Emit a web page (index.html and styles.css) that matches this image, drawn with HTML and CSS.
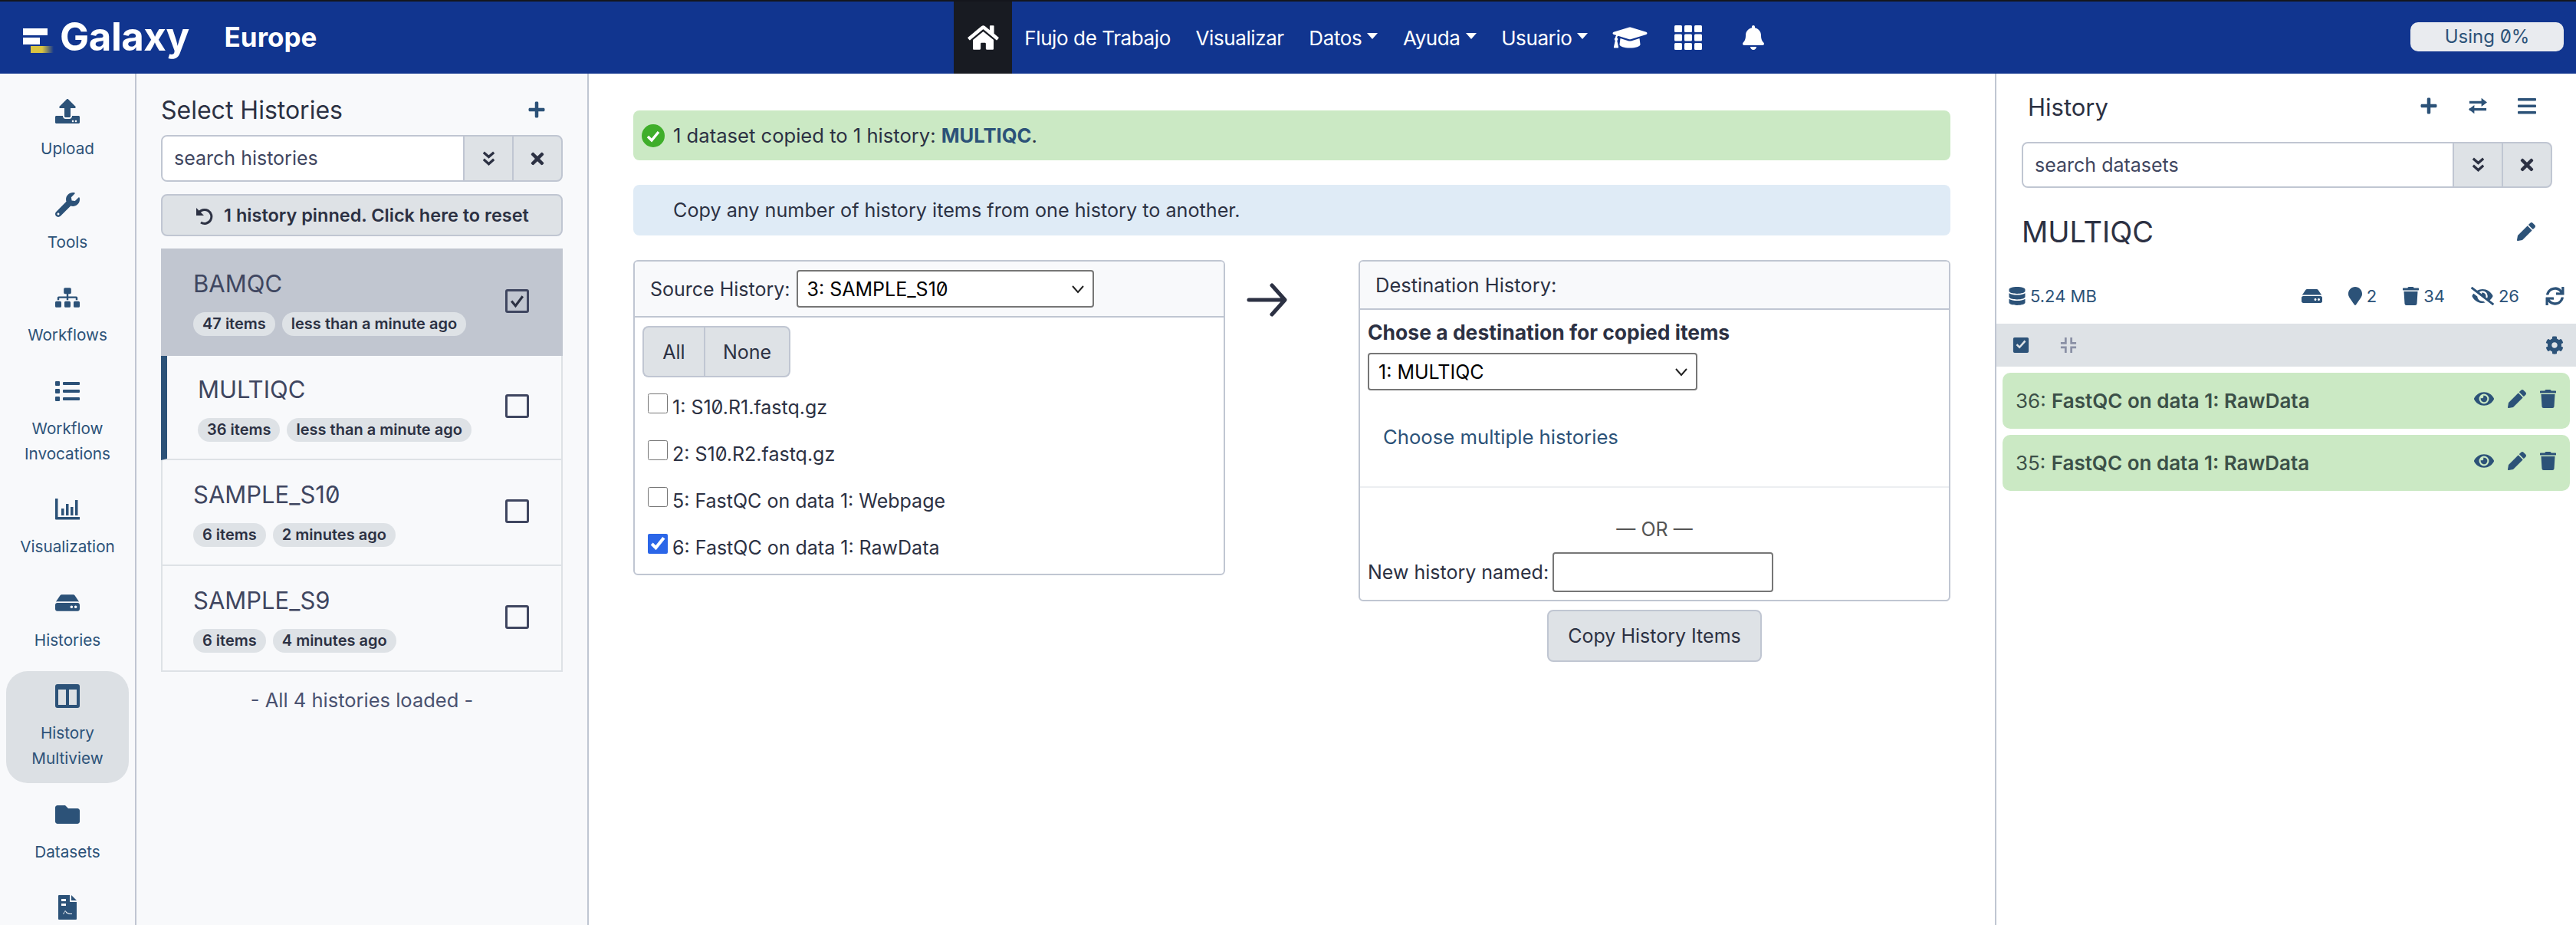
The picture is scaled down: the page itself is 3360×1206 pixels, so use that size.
FILE: index.html
```html
<!DOCTYPE html>
<html lang="es">
<head>
  <meta charset="UTF-8" />
  <title>Galaxy Europe - History Multiview</title>
  <link rel="stylesheet" href="styles.css">
</head>
<body>

  <svg class="defs" aria-hidden="true">
    <symbol id="i-upload" viewBox="0 0 512 512"><path d="M296 384h-80c-13.3 0-24-10.7-24-24V192h-87.7c-17.8 0-26.7-21.5-14.1-34.1L242.3 5.7c7.5-7.5 19.8-7.5 27.3 0l152.2 152.2c12.6 12.6 3.7 34.1-14.1 34.1H320v168c0 13.3-10.7 24-24 24zm216-8v112c0 13.3-10.7 24-24 24H24c-13.3 0-24-10.7-24-24V376c0-13.3 10.7-24 24-24h136v8c0 30.9 25.1 56 56 56h80c30.9 0 56-25.1 56-56v-8h136c13.3 0 24 10.7 24 24zm-124 88c0-11-9-20-20-20s-20 9-20 20 9 20 20 20 20-9 20-20zm64 0c0-11-9-20-20-20s-20 9-20 20 9 20 20 20 20-9 20-20z"/></symbol>
    <symbol id="i-wrench" viewBox="0 0 512 512"><path d="M507.73 109.1c-2.24-9.03-13.54-12.09-20.12-5.51l-74.36 74.36-67.88-11.31-11.31-67.88 74.36-74.36c6.62-6.62 3.43-17.9-5.66-20.16-47.38-11.74-99.55.91-136.58 37.93-39.64 39.64-50.55 97.1-34.05 147.2L18.74 402.76c-24.99 24.99-24.99 65.51 0 90.5 24.99 24.99 65.51 24.99 90.5 0l213.21-213.21c50.12 16.71 107.47 5.68 147.37-34.22 37.07-37.07 49.7-89.32 37.91-136.73zM64 472c-13.25 0-24-10.75-24-24 0-13.26 10.75-24 24-24s24 10.74 24 24c0 13.25-10.75 24-24 24z"/></symbol>
    <symbol id="i-sitemap" viewBox="0 0 640 512"><path d="M128 352H32c-17.67 0-32 14.33-32 32v96c0 17.67 14.33 32 32 32h96c17.67 0 32-14.33 32-32v-96c0-17.67-14.33-32-32-32zm-24-80h192v48h48v-48h192v48h48v-57.59c0-21.17-17.23-38.41-38.41-38.41H344v-64h40c17.67 0 32-14.33 32-32V32c0-17.67-14.33-32-32-32H256c-17.67 0-32 14.33-32 32v96c0 17.67 14.33 32 32 32h40v64H94.41C73.23 224 56 241.23 56 262.41V320h48v-48zm264 80h-96c-17.67 0-32 14.33-32 32v96c0 17.67 14.33 32 32 32h96c17.67 0 32-14.33 32-32v-96c0-17.67-14.33-32-32-32zm240 0h-96c-17.67 0-32 14.33-32 32v96c0 17.67 14.33 32 32 32h96c17.67 0 32-14.33 32-32v-96c0-17.67-14.33-32-32-32z"/></symbol>
    <symbol id="i-list" viewBox="0 0 32 32"><rect x="0" y="3" width="6" height="6" rx="1"/><rect x="0" y="13" width="6" height="6" rx="1"/><rect x="0" y="23" width="6" height="6" rx="1"/><rect x="10" y="4" width="22" height="4" rx="1"/><rect x="10" y="14" width="22" height="4" rx="1"/><rect x="10" y="24" width="22" height="4" rx="1"/></symbol>
    <symbol id="i-chart" viewBox="0 0 32 32"><path d="M0 2h3.500v24H32v3.500H1a1 1 0 0 1-1-1z"/><rect x="8" y="15" width="3.500" height="9"/><rect x="14" y="9" width="3.500" height="15"/><rect x="20" y="13" width="3.500" height="11"/><rect x="26" y="4" width="3.500" height="20"/></symbol>
    <symbol id="i-hdd" viewBox="0 0 576 512"><path d="M576 304v96c0 26.51-21.49 48-48 48H48c-26.51 0-48-21.49-48-48v-96c0-26.51 21.49-48 48-48h480c26.51 0 48 21.49 48 48zm-48-80a79.557 79.557 0 0 1 30.777 6.165L462.25 85.374A48.003 48.003 0 0 0 422.311 64H153.689a48 48 0 0 0-39.938 21.374L17.223 230.165A79.557 79.557 0 0 1 48 224h480zm-48 96c-17.673 0-32 14.327-32 32s14.327 32 32 32 32-14.327 32-32-14.327-32-32-32zm-96 0c-17.673 0-32 14.327-32 32s14.327 32 32 32 32-14.327 32-32-14.327-32-32-32z"/></symbol>
    <symbol id="i-columns" viewBox="0 0 32 32"><path fill-rule="evenodd" d="M3 1h26a3 3 0 0 1 3 3v25a3 3 0 0 1-3 3H3a3 3 0 0 1-3-3V4a3 3 0 0 1 3-3zm1 7v20h10V8zm14 0v20h10V8z"/></symbol>
    <symbol id="i-folder" viewBox="0 0 512 512"><path d="M464 128H272l-64-64H48C21.49 64 0 85.49 0 112v288c0 26.51 21.49 48 48 48h416c26.51 0 48-21.49 48-48V176c0-26.51-21.49-48-48-48z"/></symbol>
    <symbol id="i-report" viewBox="0 0 24 32"><path fill-rule="evenodd" d="M1 0h14v9h9v22a1 1 0 0 1-1 1H1a1 1 0 0 1-1-1V1a1 1 0 0 1 1-1zm3 5v3h6V5zm0 6v3h6v-3zm0 14h3l2-4 2 3h1l2 1h4v-1h-3l-3-1-3-3-3 5H4z"/><path d="M17 0l7 7h-7z"/></symbol>
    <symbol id="i-plus" viewBox="0 0 448 512"><path d="M416 208H272V64c0-17.67-14.33-32-32-32h-32c-17.67 0-32 14.33-32 32v144H32c-17.67 0-32 14.33-32 32v32c0 17.67 14.33 32 32 32h144v144c0 17.67 14.33 32 32 32h32c17.67 0 32-14.33 32-32V304h144c17.67 0 32-14.33 32-32v-32c0-17.67-14.33-32-32-32z"/></symbol>
    <symbol id="i-times" viewBox="0 0 352 512"><path d="M242.72 256l100.07-100.07c12.28-12.28 12.28-32.19 0-44.48l-22.24-22.24c-12.28-12.28-32.19-12.28-44.48 0L176 189.28 75.93 89.21c-12.28-12.28-32.19-12.28-44.48 0L9.21 111.45c-12.28 12.28-12.28 32.19 0 44.48L109.28 256 9.21 356.07c-12.28 12.28-12.28 32.19 0 44.48l22.24 22.24c12.28 12.28 32.2 12.28 44.48 0L176 322.72l100.07 100.07c12.28 12.28 32.2 12.28 44.48 0l22.24-22.24c12.28-12.28 12.28-32.19 0-44.48L242.72 256z"/></symbol>
    <symbol id="i-chevrons" viewBox="0 0 20 24"><path d="M2 2l8 7 8-7M2 13l8 7 8-7" fill="none" stroke="currentColor" stroke-width="4"/></symbol>
    <symbol id="i-pencil" viewBox="0 0 512 512"><path d="M497.9 142.1l-46.1 46.1c-4.7 4.7-12.3 4.7-17 0l-111-111c-4.7-4.7-4.7-12.3 0-17l46.1-46.1c18.7-18.7 49.1-18.7 67.9 0l60.1 60.1c18.8 18.7 18.8 49.1 0 67.9zM284.2 99.8L21.6 362.4.4 483.9c-2.9 16.4 11.4 30.6 27.8 27.8l121.5-21.3 262.6-262.6c4.7-4.7 4.7-12.3 0-17l-111-111c-4.8-4.7-12.4-4.7-17.1 0z"/></symbol>
    <symbol id="i-trash" viewBox="0 0 448 512"><path d="M432 32H312l-9.4-18.7A24 24 0 0 0 281.1 0H166.8a23.72 23.72 0 0 0-21.4 13.3L136 32H16A16 16 0 0 0 0 48v32a16 16 0 0 0 16 16h416a16 16 0 0 0 16-16V48a16 16 0 0 0-16-16zM53.2 467a48 48 0 0 0 47.9 45h245.8a48 48 0 0 0 47.9-45L416 128H32z"/></symbol>
    <symbol id="i-eye" viewBox="0 0 576 512"><path d="M572.52 241.4C518.29 135.59 410.93 64 288 64S57.68 135.64 3.48 241.41a32.35 32.35 0 0 0 0 29.19C57.71 376.41 165.07 448 288 448s230.32-71.64 284.52-177.41a32.35 32.35 0 0 0 0-29.19zM288 400a144 144 0 1 1 144-144 143.93 143.93 0 0 1-144 144zm0-240a95.31 95.31 0 0 0-25.31 3.79 47.85 47.85 0 0 1-66.9 66.9A95.78 95.78 0 1 0 288 160z"/></symbol>
    <symbol id="i-eye-slash" viewBox="0 0 640 512"><path d="M320 400c-75.85 0-137.25-58.71-142.9-133.11L72.2 185.82c-13.79 17.3-26.48 35.59-36.72 55.59a32.35 32.35 0 0 0 0 29.19C89.71 376.41 197.07 448 320 448c26.91 0 52.87-4 77.89-10.46L346 397.39a144.13 144.13 0 0 1-26 2.61zm313.82 58.1l-110.55-85.44a331.25 331.25 0 0 0 81.25-102.07 32.35 32.35 0 0 0 0-29.19C550.29 135.59 442.93 64 320 64a308.15 308.15 0 0 0-147.32 37.7L45.46 3.37A16 16 0 0 0 23 6.18L3.37 31.45A16 16 0 0 0 6.18 53.9l588.36 454.73a16 16 0 0 0 22.46-2.81l19.64-25.27a16 16 0 0 0-2.82-22.45zm-183.72-142l-39.3-30.38A94.75 94.75 0 0 0 416 256a94.76 94.76 0 0 0-121.31-92.21A47.65 47.65 0 0 1 304 192a46.64 46.64 0 0 1-1.54 10l-73.61-56.89A142.31 142.31 0 0 1 320 112a143.92 143.92 0 0 1 144 144c0 21.63-5.29 41.79-13.9 60.11z"/></symbol>
    <symbol id="i-database" viewBox="0 0 448 512"><path d="M448 73.143v45.714C448 159.143 347.667 192 224 192S0 159.143 0 118.857V73.143C0 32.857 100.333 0 224 0s224 32.857 224 73.143zM448 176v102.857C448 319.143 347.667 352 224 352S0 319.143 0 278.857V176c48.125 33.143 136.208 48.572 224 48.572S399.874 209.143 448 176zm0 160v102.857C448 479.143 347.667 512 224 512S0 479.143 0 438.857V336c48.125 33.143 136.208 48.572 224 48.572S399.874 369.143 448 336z"/></symbol>
    <symbol id="i-marker" viewBox="0 0 384 512"><path d="M172.268 501.67C26.97 291.031 0 269.413 0 192 0 85.961 85.961 0 192 0s192 85.961 192 192c0 77.413-26.97 99.031-172.268 309.67-9.535 13.774-29.93 13.773-39.464 0z"/></symbol>
    <symbol id="i-sync" viewBox="0 0 512 512"><path d="M440.65 12.57l4 82.77A247.16 247.16 0 0 0 255.83 8C134.73 8 33.91 94.92 12.29 209.82A12 12 0 0 0 24.09 224h49.05a12 12 0 0 0 11.67-9.26 175.91 175.91 0 0 1 317-56.94l-101.46-4.86a12 12 0 0 0-12.57 12v47.41a12 12 0 0 0 12 12H500a12 12 0 0 0 12-12V12a12 12 0 0 0-12-12h-47.37a12 12 0 0 0-11.98 12.57zM255.83 432a175.61 175.61 0 0 1-146-77.8l101.8 4.87a12 12 0 0 0 12.57-12v-47.4a12 12 0 0 0-12-12H12a12 12 0 0 0-12 12V500a12 12 0 0 0 12 12h47.35a12 12 0 0 0 12-12.6l-4.15-82.57A247.17 247.17 0 0 0 255.83 504c121.11 0 221.93-86.92 243.55-201.82a12 12 0 0 0-11.8-14.18h-49.05a12 12 0 0 0-11.67 9.26A175.86 175.86 0 0 1 255.83 432z"/></symbol>
    <symbol id="i-cog" viewBox="0 0 512 512"><path d="M487.4 315.7l-42.6-24.6c4.3-23.2 4.3-47 0-70.2l42.6-24.6c4.9-2.8 7.1-8.6 5.5-14-11.1-35.6-30-67.8-54.7-94.6-3.8-4.1-10-5.1-14.8-2.3L380.8 110c-17.9-15.4-38.5-27.3-60.8-35.1V25.8c0-5.6-3.9-10.5-9.4-11.7-36.7-8.2-74.3-7.8-109.2 0-5.5 1.2-9.4 6.1-9.4 11.7V75c-22.2 7.9-42.8 19.8-60.8 35.1L88.7 85.5c-4.9-2.8-11-1.9-14.8 2.3-24.7 26.7-43.6 58.9-54.7 94.6-1.7 5.4.6 11.2 5.5 14L67.3 221c-4.3 23.2-4.3 47 0 70.2l-42.6 24.6c-4.9 2.8-7.1 8.6-5.5 14 11.1 35.6 30 67.8 54.7 94.6 3.8 4.1 10 5.1 14.8 2.3l42.6-24.6c17.9 15.4 38.5 27.3 60.8 35.1v49.2c0 5.6 3.9 10.5 9.4 11.7 36.7 8.2 74.3 7.8 109.2 0 5.5-1.2 9.4-6.1 9.4-11.7v-49.2c22.2-7.9 42.8-19.8 60.8-35.1l42.6 24.6c4.9 2.8 11 1.9 14.8-2.3 24.7-26.7 43.6-58.9 54.7-94.6 1.5-5.5-.7-11.3-5.6-14.1zM256 336c-44.1 0-80-35.9-80-80s35.9-80 80-80 80 35.9 80 80-35.9 80-80 80z"/></symbol>
    <symbol id="i-home" viewBox="0 0 576 512"><path d="M280.37 148.26L96 300.11V464a16 16 0 0 0 16 16l112.06-.29a16 16 0 0 0 15.92-16V368a16 16 0 0 1 16-16h64a16 16 0 0 1 16 16v95.64a16 16 0 0 0 16 16.05L464 480a16 16 0 0 0 16-16V300L295.67 148.26a12.19 12.19 0 0 0-15.3 0zM571.6 251.47L488 182.56V44.05a12 12 0 0 0-12-12h-56a12 12 0 0 0-12 12v72.61L318.47 43a48 48 0 0 0-61 0L4.34 251.47a12 12 0 0 0-1.6 16.9l25.5 31A12 12 0 0 0 45.15 301l235.22-193.74a12.19 12.19 0 0 1 15.3 0L530.9 301a12 12 0 0 0 16.9-1.6l25.5-31a12 12 0 0 0-1.7-16.93z"/></symbol>
    <symbol id="i-cap" viewBox="0 0 640 512"><path d="M622.34 153.2L343.4 67.5c-15.2-4.67-31.6-4.67-46.79 0L17.66 153.2c-23.54 7.23-23.54 38.36 0 45.59l48.63 14.94c-10.67 13.19-17.23 29.28-17.88 46.9C38.78 266.15 32 276.11 32 288c0 10.78 5.68 19.85 13.86 25.65L20.33 428.53C18.11 438.52 25.71 448 35.94 448h56.11c10.24 0 17.84-9.48 15.62-19.47L82.14 313.65C90.32 307.85 96 298.78 96 288c0-11.57-6.47-21.25-15.66-26.87.76-15.02 8.44-28.3 20.69-36.72L296.6 284.5c9.06 2.78 26.44 6.25 46.79 0l278.95-85.7c23.55-7.24 23.55-38.36 0-45.6zM352.79 315.09c-28.53 8.76-52.84 3.92-65.59 0l-145.02-44.55L128 384c0 35.35 85.96 64 192 64s192-28.65 192-64l-14.18-113.47-145.03 44.56z"/></symbol>
    <symbol id="i-grid" viewBox="0 0 36 32"><rect width="10" height="9" rx="1.500"/><rect x="13" width="10" height="9" rx="1.500"/><rect x="26" width="10" height="9" rx="1.500"/><rect y="11.500" width="10" height="9" rx="1.500"/><rect x="13" y="11.500" width="10" height="9" rx="1.500"/><rect x="26" y="11.500" width="10" height="9" rx="1.500"/><rect y="23" width="10" height="9" rx="1.500"/><rect x="13" y="23" width="10" height="9" rx="1.500"/><rect x="26" y="23" width="10" height="9" rx="1.500"/></symbol>
    <symbol id="i-bell" viewBox="0 0 448 512"><path d="M224 512c35.32 0 63.97-28.65 63.97-64H160.03c0 35.35 28.65 64 63.97 64zm215.39-149.71c-19.32-20.76-55.47-51.99-55.47-154.29 0-77.7-54.48-139.9-127.94-155.16V32c0-17.67-14.32-32-31.98-32s-31.98 14.33-31.98 32v20.84C118.56 68.1 64.08 130.3 64.08 208c0 102.3-36.15 133.53-55.47 154.29-6 6.45-8.66 14.16-8.61 21.71.11 16.4 12.98 32 32.1 32h383.8c19.12 0 32-15.6 32.1-32 .05-7.55-2.61-15.27-8.61-21.71z"/></symbol>
    <symbol id="i-undo" viewBox="0 0 24 24"><path d="M5 9a9 9 0 1 1 3 12" fill="none" stroke="currentColor" stroke-width="3"/><path d="M2 2v10h10z"/></symbol>
    <symbol id="i-exchange" viewBox="0 0 26 24"><path d="M1 7h18M1 17h24" fill="none" stroke="currentColor" stroke-width="3.500"/><path d="M18 1l8 6-8 6zM8 11l-8 6 8 6z"/></symbol>
    <symbol id="i-bars" viewBox="0 0 24 24"><rect y="2" width="24" height="3.500" rx="1"/><rect y="10.500" width="24" height="3.500" rx="1"/><rect y="19" width="24" height="3.500" rx="1"/></symbol>
    <symbol id="i-check-box" viewBox="0 0 24 24"><path fill-rule="evenodd" d="M3 1h18a2 2 0 0 1 2 2v18a2 2 0 0 1-2 2H3a2 2 0 0 1-2-2V3a2 2 0 0 1 2-2zm2 11l5 5 9-10-2-2-7 8-3-3z"/></symbol>
    <symbol id="i-compress" viewBox="0 0 24 24"><path d="M8 1v8H1M16 1v8h7M8 23v-8H1M16 23v-8h7" fill="none" stroke="currentColor" stroke-width="3"/></symbol>
    <symbol id="i-arrow" viewBox="0 0 54 44"><path d="M3 22h46M33 3l17 19-17 19" fill="none" stroke="currentColor" stroke-width="5" stroke-linecap="round" stroke-linejoin="round"/></symbol>
  </svg>

  <header class="masthead">
    <a class="brand">
      <svg class="brand-mark" viewBox="0 0 40 34">
        <defs>
          <linearGradient id="gold">
            <stop offset="0.5" stop-color="#d9c441"/>
            <stop offset="1" stop-color="#d9c441" stop-opacity="0"/>
          </linearGradient>
        </defs>
        <rect x="0" y="0" width="32" height="9" fill="#fff"/>
        <rect x="0" y="12" width="22" height="9" fill="#fff"/>
        <rect x="10" y="23" width="30" height="9" fill="url(#gold)"/>
      </svg>
      <span class="brand-name">Galaxy</span>
      <span class="brand-site">Europe</span>
    </a>
    <nav class="nav">
      <a class="nav-home"><svg class="ic ic-home"><use href="#i-home"/></svg></a>
      <a class="nav-link">Flujo de Trabajo</a>
      <a class="nav-link">Visualizar</a>
      <a class="nav-link caret">Datos</a>
      <a class="nav-link caret">Ayuda</a>
      <a class="nav-link caret">Usuario</a>
      <a class="nav-icon"><svg class="ic ic-cap"><use href="#i-cap"/></svg></a>
      <a class="nav-icon"><svg class="ic ic-grid"><use href="#i-grid"/></svg></a>
      <a class="nav-icon"><svg class="ic ic-bell"><use href="#i-bell"/></svg></a>
    </nav>
    <div class="quota">Using 0%</div>
  </header>

  <div class="layout">

    <aside class="sidebar">
      <a class="side-item"><svg class="ic side-ic"><use href="#i-upload"/></svg><span>Upload</span></a>
      <a class="side-item"><svg class="ic side-ic"><use href="#i-wrench"/></svg><span>Tools</span></a>
      <a class="side-item"><svg class="ic side-ic"><use href="#i-sitemap"/></svg><span>Workflows</span></a>
      <a class="side-item"><svg class="ic side-ic"><use href="#i-list"/></svg><span>Workflow<br>Invocations</span></a>
      <a class="side-item"><svg class="ic side-ic"><use href="#i-chart"/></svg><span>Visualization</span></a>
      <a class="side-item"><svg class="ic side-ic"><use href="#i-hdd"/></svg><span>Histories</span></a>
      <a class="side-item active"><svg class="ic side-ic"><use href="#i-columns"/></svg><span>History<br>Multiview</span></a>
      <a class="side-item"><svg class="ic side-ic"><use href="#i-folder"/></svg><span>Datasets</span></a>
      <a class="side-item"><svg class="ic side-ic"><use href="#i-report"/></svg></a>
    </aside>

    <section class="panel">
      <div class="panel-head">
        <h2 class="panel-title">Select Histories</h2>
        <svg class="ic ic-action"><use href="#i-plus"/></svg>
      </div>

      <div class="search">
        <span class="search-input">search histories</span>
        <span class="search-btn"><svg class="ic ic-chev"><use href="#i-chevrons"/></svg></span>
        <span class="search-btn"><svg class="ic ic-x"><use href="#i-times"/></svg></span>
      </div>

      <button class="pin-reset"><svg class="ic ic-undo"><use href="#i-undo"/></svg>1 history pinned. Click here to reset</button>

      <div class="hist-card pinned">
        <div>
          <div class="hist-name">BAMQC</div>
          <span class="badge">47 items</span><span class="badge">less than a minute ago</span>
        </div>
        <span class="fake-check on"><svg viewBox="0 0 24 24"><path d="M5 12l5 6 9-12" fill="none" stroke="currentColor" stroke-width="3"/></svg></span>
      </div>
      <div class="hist-card current">
        <div>
          <div class="hist-name">MULTIQC</div>
          <span class="badge">36 items</span><span class="badge">less than a minute ago</span>
        </div>
        <span class="fake-check"></span>
      </div>
      <div class="hist-card">
        <div>
          <div class="hist-name">SAMPLE_S10</div>
          <span class="badge">6 items</span><span class="badge">2 minutes ago</span>
        </div>
        <span class="fake-check"></span>
      </div>
      <div class="hist-card">
        <div>
          <div class="hist-name">SAMPLE_S9</div>
          <span class="badge">6 items</span><span class="badge">4 minutes ago</span>
        </div>
        <span class="fake-check"></span>
      </div>

      <p class="loaded">- All 4 histories loaded -</p>
    </section>

    <main class="center">
      <div class="alert alert-ok">
        <svg class="alert-ic" viewBox="0 0 30 30"><circle cx="15" cy="15" r="15" fill="#3fae2a"/><path d="M8 16l5 5 9-11" fill="none" stroke="#fff" stroke-width="3.500"/></svg>
        <span>1 dataset copied to 1 history: <a class="alert-link">MULTIQC</a>.</span>
      </div>
      <div class="alert alert-info">Copy any number of history items from one history to another.</div>

      <div class="copy-grid">
        <div class="copy-card">
          <div class="copy-head source-head">
            <label class="source-label">Source History:</label>
            <select class="select source-select"><option>3: SAMPLE_S10</option></select>
          </div>
          <div class="source-body">
            <div class="btn-group"><button class="btn btn-all">All</button><button class="btn btn-none">None</button></div>
            <label class="row"><input type="checkbox"><span>1: S10.R1.fastq.gz</span></label>
            <label class="row"><input type="checkbox"><span>2: S10.R2.fastq.gz</span></label>
            <label class="row"><input type="checkbox"><span>5: FastQC on data 1: Webpage</span></label>
            <label class="row"><input type="checkbox" checked><span>6: FastQC on data 1: RawData</span></label>
          </div>
        </div>

        <svg class="ic copy-arrow"><use href="#i-arrow"/></svg>

        <div>
          <div class="copy-card">
            <div class="copy-head dest-head">Destination History:</div>
            <div class="dest-body">
              <div class="dest-title">Chose a destination for copied items</div>
              <select class="select dest-select"><option>1: MULTIQC</option></select>
              <a class="dest-link">Choose multiple histories</a>
              <hr class="dest-rule">
              <div class="dest-or">— OR —</div>
              <label class="dest-new">New history named: <input class="dest-input" type="text"></label>
            </div>
          </div>
          <div class="copy-submit"><button class="btn btn-copy">Copy History Items</button></div>
        </div>
      </div>
    </main>

    <aside class="history">
      <div class="history-head">
        <h2 class="history-title">History</h2>
        <div class="history-actions">
          <svg class="ic ic-action"><use href="#i-plus"/></svg>
          <svg class="ic ic-action"><use href="#i-exchange"/></svg>
          <svg class="ic ic-action"><use href="#i-bars"/></svg>
        </div>
      </div>

      <div class="search search-data">
        <span class="search-input">search datasets</span>
        <span class="search-btn"><svg class="ic ic-chev"><use href="#i-chevrons"/></svg></span>
        <span class="search-btn"><svg class="ic ic-x"><use href="#i-times"/></svg></span>
      </div>

      <div class="history-name">
        <span>MULTIQC</span>
        <svg class="ic ic-edit"><use href="#i-pencil"/></svg>
      </div>

      <div class="stats">
        <span class="stat stat-size"><svg class="ic ic-db"><use href="#i-database"/></svg>5.24 MB</span>
        <span class="stat-group">
          <span class="stat"><svg class="ic ic-stat-hdd"><use href="#i-hdd"/></svg></span>
          <span class="stat"><svg class="ic ic-stat-pin"><use href="#i-marker"/></svg>2</span>
          <span class="stat"><svg class="ic ic-stat-trash"><use href="#i-trash"/></svg>34</span>
          <span class="stat"><svg class="ic ic-stat-eye"><use href="#i-eye-slash"/></svg>26</span>
          <span class="stat"><svg class="ic ic-stat-sync"><use href="#i-sync"/></svg></span>
        </span>
      </div>

      <div class="toolbar">
        <svg class="ic ic-tool"><use href="#i-check-box"/></svg>
        <svg class="ic ic-tool muted"><use href="#i-compress"/></svg>
        <svg class="ic ic-tool ic-gear"><use href="#i-cog"/></svg>
      </div>

      <div class="item">
        <span class="item-text">36: <b>FastQC on data 1: RawData</b></span>
        <span class="item-actions">
          <svg class="ic ic-eye"><use href="#i-eye"/></svg>
          <svg class="ic ic-pen"><use href="#i-pencil"/></svg>
          <svg class="ic ic-bin"><use href="#i-trash"/></svg>
        </span>
      </div>
      <div class="item">
        <span class="item-text">35: <b>FastQC on data 1: RawData</b></span>
        <span class="item-actions">
          <svg class="ic ic-eye"><use href="#i-eye"/></svg>
          <svg class="ic ic-pen"><use href="#i-pencil"/></svg>
          <svg class="ic ic-bin"><use href="#i-trash"/></svg>
        </span>
      </div>
    </aside>

  </div>

</body>
</html>
```

FILE: styles.css
```css
* {
  box-sizing: border-box;
}

html, body {
  height: 100%;
}

body {
  margin: 0;
  overflow: hidden;
  font-family: 'Inter', 'Liberation Sans', sans-serif;
  font-size: 25px;
  font-variant-numeric: slashed-zero;
  color: #2c3143;
  background-color: #fff;
  display: flex;
  flex-direction: column;
}

button, select, input {
  font-family: inherit;
  font-variant-numeric: inherit;
}

.defs {
  display: none;
}

.ic {
  display: block;
  flex: none;
  fill: currentColor;
}

/* masthead */

.masthead {
  flex: none;
  height: 96px;
  display: flex;
  align-items: stretch;
  background-color: #11358f;
  border-top: 2px solid #14161d;
  color: #fff;
}

.brand {
  width: 1244px;
  display: flex;
  align-items: center;
  padding-left: 30px;
}

.brand-mark {
  width: 40px;
  height: 34px;
  margin-top: 9px;
}

.brand-name {
  margin: -4px 0 0 8px;
  font-size: 51px;
  font-weight: 700;
  letter-spacing: -0.5px;
}

.brand-site {
  margin: -2px 0 0 46px;
  font-size: 35px;
  font-weight: 700;
}

.nav {
  display: flex;
  align-items: stretch;
}

.nav-home {
  width: 76px;
  display: flex;
  align-items: center;
  justify-content: center;
  background-color: #181b22;
}

.ic-home {
  width: 41px;
  height: 36px;
}

.nav-link {
  padding: 0 16.3px;
  display: flex;
  align-items: center;
  font-size: 26px;
  letter-spacing: -0.4px;
  white-space: nowrap;
}

.caret::after {
  content: "";
  margin: -4px 0 0 7px;
  border-top: 8px solid #fff;
  border-left: 7px solid transparent;
  border-right: 7px solid transparent;
}

.nav-icon {
  width: 76px;
  display: flex;
  align-items: center;
  justify-content: center;
}

.ic-cap {
  width: 46px;
  height: 36px;
}

.ic-grid {
  width: 36px;
  height: 32px;
}

.ic-bell {
  width: 28px;
  height: 32px;
  margin-left: 18px;
}

.quota {
  align-self: center;
  width: 200px;
  height: 38px;
  margin: -2px 16px 0 auto;
  border-radius: 10px;
  background-color: #e9ebef;
  color: #2c5278;
  font-size: 24px;
  line-height: 38px;
  text-align: center;
}

/* page columns */

.layout {
  flex: 1;
  min-height: 0;
  display: flex;
}

.sidebar {
  flex: none;
  width: 178px;
  padding: 17px 8px 0;
  background-color: #f8f9fb;
  border-right: 2px solid #c0c6d2;
  display: flex;
  flex-direction: column;
  gap: 8.5px;
  overflow: hidden;
}

.side-item {
  flex: none;
  padding: 16px 0;
  display: flex;
  flex-direction: column;
  align-items: center;
  gap: 16px;
  border-radius: 28px;
  color: #2c5278;
  font-size: 20.7px;
  line-height: 33px;
  text-align: center;
}

.side-item.active {
  background-color: #dce0e4;
}

.side-ic {
  width: 32px;
  height: 32px;
}

/* history selector */

.panel {
  flex: none;
  width: 590px;
  padding: 28px 32px 0;
  background-color: #f8f9fb;
  border-right: 2px solid #c0c6d2;
}

.panel-head {
  height: 38px;
  display: flex;
  align-items: center;
  justify-content: space-between;
  color: #2c5278;
}

.panel-title {
  margin: 0;
  font-size: 32px;
  font-weight: 400;
  color: #2c3143;
}

.ic-action {
  width: 24px;
  height: 24px;
}

.panel-head .ic-action {
  margin-right: 22px;
}

.search {
  height: 61px;
  margin-top: 14px;
  display: flex;
  border: 2px solid #c0c6d2;
  border-radius: 8px;
  background-color: #dee2e6;
  overflow: hidden;
}

.search-input {
  flex: 1;
  padding-left: 15px;
  background-color: #fff;
  color: #3f4660;
  line-height: 56px;
}

.search-btn {
  width: 64px;
  display: flex;
  align-items: center;
  justify-content: center;
  border-left: 2px solid #c0c6d2;
}

.ic-chev {
  width: 17px;
  height: 20px;
}

.ic-x {
  width: 22px;
  height: 24px;
}

.pin-reset {
  width: 100%;
  height: 55px;
  margin: 16px 0;
  padding: 0;
  display: flex;
  align-items: center;
  justify-content: center;
  gap: 14px;
  border: 2px solid #c0c6d2;
  border-radius: 8px;
  background-color: #dee2e6;
  color: #2c3143;
  font-size: 23.5px;
  font-weight: 600;
}

.ic-undo {
  width: 24px;
  height: 24px;
}

.hist-card {
  height: 138px;
  padding: 28px 42px 0 40px;
  display: flex;
  justify-content: space-between;
  border: 2px solid #dee2e6;
  border-top: 0;
}

.hist-card.pinned {
  height: 140px;
  padding-top: 29px;
  background-color: #c1c6d0;
  border-color: #c1c6d0;
}

.hist-card.current {
  height: 136px;
  padding-top: 27px;
  border-left: 8px solid #2c5278;
}

.hist-name {
  height: 34px;
  margin-bottom: 18px;
  font-size: 31px;
  line-height: 34px;
  color: #3f4660;
}

.badge {
  display: inline-block;
  height: 31px;
  margin-right: 9px;
  padding: 0 12px;
  border-radius: 16px;
  background-color: #dee2e6;
  color: #2c3143;
  font-size: 20px;
  font-weight: 600;
  line-height: 31px;
  white-space: nowrap;
}

.fake-check {
  flex: none;
  width: 31px;
  height: 31px;
  margin-top: 23px;
  border: 3px solid #3f4660;
  border-radius: 3px;
  color: #2c3143;
}

.hist-card.pinned .fake-check {
  margin-top: 24px;
}

.fake-check svg {
  display: block;
}

.loaded {
  margin: 20px 0 0;
  text-align: center;
  font-size: 25.5px;
  line-height: 34px;
  color: #4a5270;
}

/* copy form */

.center {
  flex: none;
  width: 1834px;
  padding: 48px 58px 0;
}

.alert {
  height: 65px;
  margin-bottom: 32px;
  display: flex;
  align-items: center;
  border-radius: 8px;
  padding-left: 52px;
  font-size: 25.2px;
}

.alert-ok {
  padding-left: 11px;
  background-color: #cbe9c4;
  font-size: 25.6px;
}

.alert-ic {
  flex: none;
  width: 30px;
  height: 30px;
  margin-right: 11px;
}

.alert-link {
  color: #2c5278;
  font-weight: 700;
}

.alert-info {
  height: 66px;
  background-color: #dfebf6;
}

.copy-grid {
  display: grid;
  grid-template-columns: 772px 174px 772px;
  align-items: start;
}

.copy-card {
  border: 2px solid #c0c6d2;
  border-radius: 6px;
  overflow: hidden;
}

.copy-head {
  background-color: #f8f9fb;
  border-bottom: 2px solid #c0c6d2;
  display: flex;
  align-items: center;
}

.source-head {
  height: 73px;
  padding-left: 20px;
  gap: 8px;
}

.select {
  appearance: none;
  border: 2px solid #767676;
  border-radius: 4px;
  background: #fff url("data:image/svg+xml,%3Csvg xmlns='http://www.w3.org/2000/svg' viewBox='0 0 18 12'%3E%3Cpath d='M2 2l7 8 7-8' fill='none' stroke='%23222' stroke-width='2'/%3E%3C/svg%3E") no-repeat right 10px center / 18px 12px;
  color: #000;
  font-size: 25px;
  padding-left: 12px;
}

.source-select {
  width: 388px;
  height: 49px;
}

.source-body {
  height: 334px;
  padding: 11px 10px 0;
}

.btn-group {
  display: flex;
  width: 193px;
  height: 67px;
  margin-bottom: 11px;
}

.btn {
  border: 2px solid #c0c6d2;
  background-color: #dee2e6;
  color: #2c3143;
  font-size: 25px;
}

.btn-all {
  width: 80px;
  padding: 0;
  border-radius: 8px 0 0 8px;
  border-right: 0;
}

.btn-none {
  flex: 1;
  padding: 0;
  border-radius: 0 8px 8px 0;
}

.row {
  height: 61px;
  padding: 10px 0 0 7px;
  display: flex;
  gap: 6px;
}

.row input {
  width: 26px;
  height: 26px;
  margin: 0;
  accent-color: #2b66e8;
}

.row span {
  margin-top: 3px;
}

.copy-arrow {
  width: 54px;
  height: 44px;
  margin: 30px 0 0 28px;
}

.dest-head {
  height: 63px;
  padding-left: 20px;
  font-size: 25.5px;
}

.dest-body {
  height: 378px;
  padding: 12px 10px 0;
}

.dest-title {
  font-size: 26.5px;
  font-weight: 700;
  line-height: 34px;
}

.dest-select {
  display: block;
  width: 430px;
  height: 49px;
  margin-top: 10px;
}

.dest-link {
  display: block;
  margin: 44px 0 0 20px;
  color: #2c5278;
  font-size: 25.7px;
  line-height: 34px;
}

.dest-rule {
  margin: 47px -10px 0;
  border: 0;
  border-top: 2px solid #eceef1;
}

.dest-or {
  margin-top: 37px;
  text-align: center;
  color: #555;
  line-height: 34px;
}

.dest-new {
  display: flex;
  align-items: center;
  gap: 5px;
  margin-top: 13px;
}

.dest-input {
  width: 288px;
  height: 52px;
  border: 2px solid #767676;
  border-radius: 4px;
}

.copy-submit {
  margin-top: 11px;
  text-align: center;
}

.btn-copy {
  width: 280px;
  height: 68px;
  padding: 0;
  border-radius: 8px;
}

/* current history */

.history {
  flex: 1;
  min-width: 0;
  border-left: 2px solid #c0c6d2;
}

.history-head {
  height: 87px;
  padding: 0 52px 0 41px;
  display: flex;
  align-items: center;
  justify-content: space-between;
}

.history-title {
  margin: 0;
  font-size: 31px;
  font-weight: 400;
}

.history-actions {
  display: flex;
  gap: 40px;
  color: #2c5278;
  margin-top: -4px;
}

.search-data {
  height: 60px;
  margin: 2px 31px 0 33px;
}

.history-name {
  height: 113px;
  padding: 0 53px 0 33px;
  display: flex;
  align-items: center;
  justify-content: space-between;
  font-size: 38px;
}

.ic-edit {
  width: 24px;
  height: 24px;
  color: #2c5278;
}

.stats {
  height: 56px;
  margin-bottom: 8px;
  padding: 0 15px 0 16px;
  display: flex;
  align-items: center;
  justify-content: space-between;
  color: #2c5278;
  font-size: 22px;
}

.stat {
  display: flex;
  align-items: center;
  gap: 6px;
}

.stat-group {
  display: flex;
  align-items: center;
  gap: 34px;
}

.ic-db {
  width: 22px;
  height: 24px;
}

.ic-stat-hdd {
  width: 27px;
  height: 24px;
}

.ic-stat-pin {
  width: 18px;
  height: 24px;
}

.ic-stat-trash {
  width: 21px;
  height: 24px;
}

.ic-stat-eye {
  width: 30px;
  height: 24px;
}

.ic-stat-sync {
  width: 25px;
  height: 24px;
}

.toolbar {
  height: 56px;
  padding: 0 16px 0 21px;
  display: flex;
  align-items: center;
  gap: 40px;
  background-color: #dee2e6;
  color: #2c5278;
}

.ic-tool {
  width: 22px;
  height: 22px;
}

.muted {
  color: #8a90a5;
}

.ic-gear {
  width: 24px;
  height: 24px;
  margin-left: auto;
}

.item {
  height: 73px;
  margin: 8px 8px 0;
  padding: 0 18px 0 17px;
  display: flex;
  align-items: center;
  justify-content: space-between;
  border-radius: 10px;
  background-color: #cbe9c4;
  color: #3c5048;
  font-size: 26px;
}

.item-text b {
  font-weight: 600;
}

.item-actions {
  display: flex;
  align-items: center;
  gap: 18px;
  margin-top: -5px;
  color: #2c5278;
}

.ic-eye {
  width: 26px;
  height: 24px;
}

.ic-pen {
  width: 24px;
  height: 24px;
}

.ic-bin {
  width: 21px;
  height: 24px;
}
```
